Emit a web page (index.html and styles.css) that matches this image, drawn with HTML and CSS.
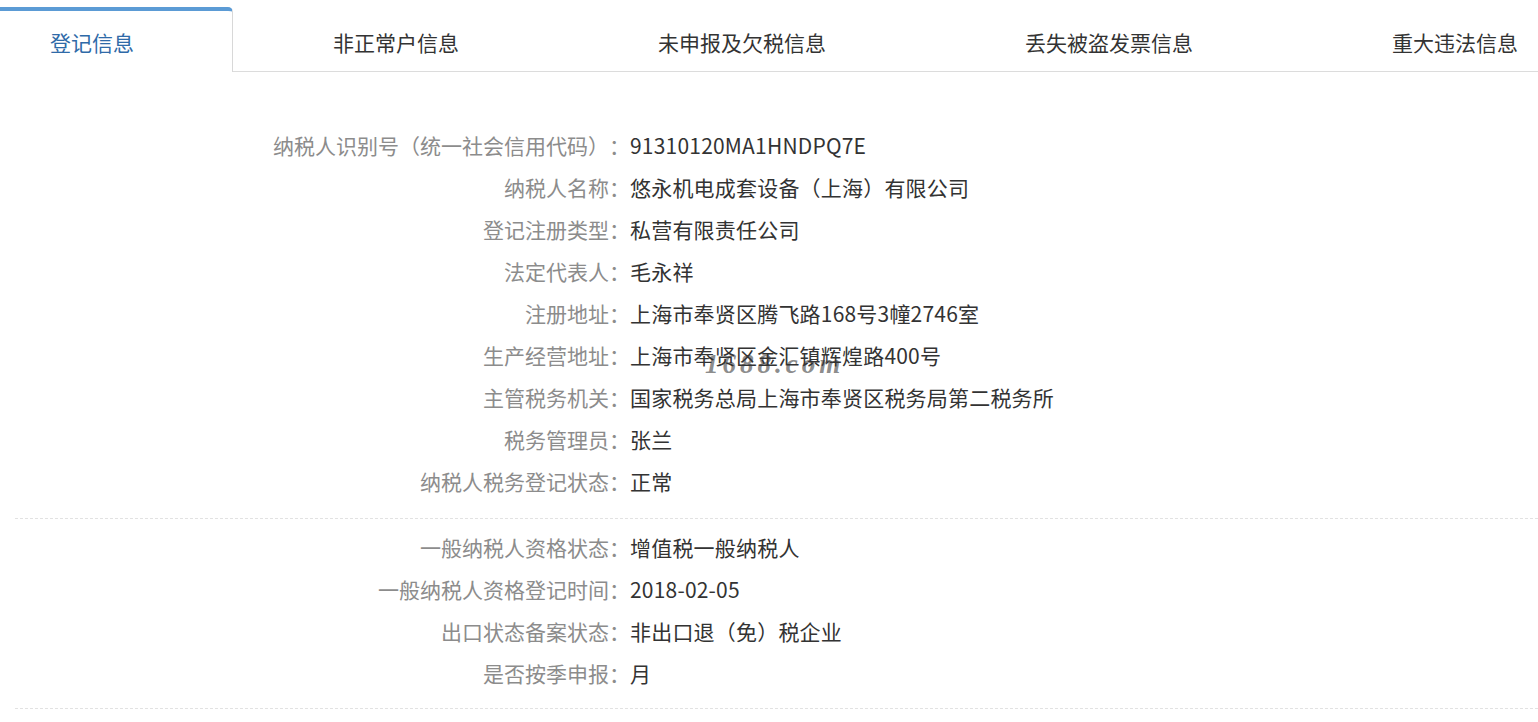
FILE: index.html
```html
<!DOCTYPE html>
<html lang="zh-CN">
<head>
<meta charset="utf-8">
<title>登记信息</title>
<link rel="stylesheet" href="styles.css">
</head>
<body>
<div class="page">
  <nav class="tabs">
    <div class="tab tab-first active">登记信息</div>
    <div class="tab">非正常户信息</div>
    <div class="tab">未申报及欠税信息</div>
    <div class="tab">丢失被盗发票信息</div>
    <div class="tab tab-last">重大违法信息</div>
  </nav>

  <section class="group group-first">
    <div class="row"><span class="label">纳税人识别号（统一社会信用代码）：</span><span class="value">91310120MA1HNDPQ7E</span></div>
    <div class="row"><span class="label">纳税人名称：</span><span class="value">悠永机电成套设备（上海）有限公司</span></div>
    <div class="row"><span class="label">登记注册类型：</span><span class="value">私营有限责任公司</span></div>
    <div class="row"><span class="label">法定代表人：</span><span class="value">毛永祥</span></div>
    <div class="row"><span class="label">注册地址：</span><span class="value">上海市奉贤区腾飞路168号3幢2746室</span></div>
    <div class="row"><span class="label">生产经营地址：</span><span class="value">上海市奉贤区金汇镇辉煌路400号</span></div>
    <div class="row"><span class="label">主管税务机关：</span><span class="value">国家税务总局上海市奉贤区税务局第二税务所</span></div>
    <div class="row"><span class="label">税务管理员：</span><span class="value">张兰</span></div>
    <div class="row"><span class="label">纳税人税务登记状态：</span><span class="value">正常</span></div>
  </section>

  <section class="group group-second">
    <div class="row"><span class="label">一般纳税人资格状态：</span><span class="value">增值税一般纳税人</span></div>
    <div class="row"><span class="label">一般纳税人资格登记时间：</span><span class="value">2018-02-05</span></div>
    <div class="row"><span class="label">出口状态备案状态：</span><span class="value">非出口退（免）税企业</span></div>
    <div class="row"><span class="label">是否按季申报：</span><span class="value">月</span></div>
  </section>

  <div class="watermark">1688.com</div>
</div>
</body>
</html>
```

FILE: styles.css
```css
html, body {
  margin: 0;
  padding: 0;
  background: #ffffff;
  overflow: hidden;
}

.page {
  position: relative;
  width: 1538px;
  height: 722px;
  font-family: "Noto Sans CJK SC", "Microsoft YaHei", sans-serif;
  font-size: 21px;
  color: #333333;
  text-spacing-trim: space-all;
}

.tabs {
  display: flex;
  height: 64px;
  padding-top: 7px;
  border-bottom: 1px solid #dcdcdc;
  white-space: nowrap;
}

.tab {
  box-sizing: border-box;
  height: 65px;
  margin-bottom: -1px;
  display: flex;
  align-items: center;
  padding: 0 99px 0 100px;
  border-top: 4px solid transparent;
  color: #333333;
}

.tab-first {
  padding: 0 98px 0 50px;
}

.tab-last {
  padding-right: 0;
}

.tab.active {
  background: #ffffff;
  color: #2f6aa8;
  border-top: 4px solid #5b9bd5;
  border-right: 1px solid #d8d8d8;
  border-top-right-radius: 5px;
}

.group {
  margin-left: 15px;
  border-bottom: 1px dashed #e2e2e2;
}

.group-first {
  padding: 52px 0 16px;
}

.group-second {
  padding: 7px 0 14px;
}

.row {
  position: relative;
  z-index: 1;
  display: flex;
  height: 42px;
  line-height: 42px;
  white-space: nowrap;
}

.label {
  width: 615px;
  text-align: right;
  color: #8c8c8c;
}

.value {
  color: #333333;
  letter-spacing: 0.2px;
}

.watermark {
  position: absolute;
  z-index: 0;
  left: 705px;
  top: 349px;
  font-family: "Liberation Serif", serif;
  font-style: italic;
  font-weight: bold;
  font-size: 27px;
  letter-spacing: 4px;
  color: rgba(110, 110, 110, 0.8);
}
```
